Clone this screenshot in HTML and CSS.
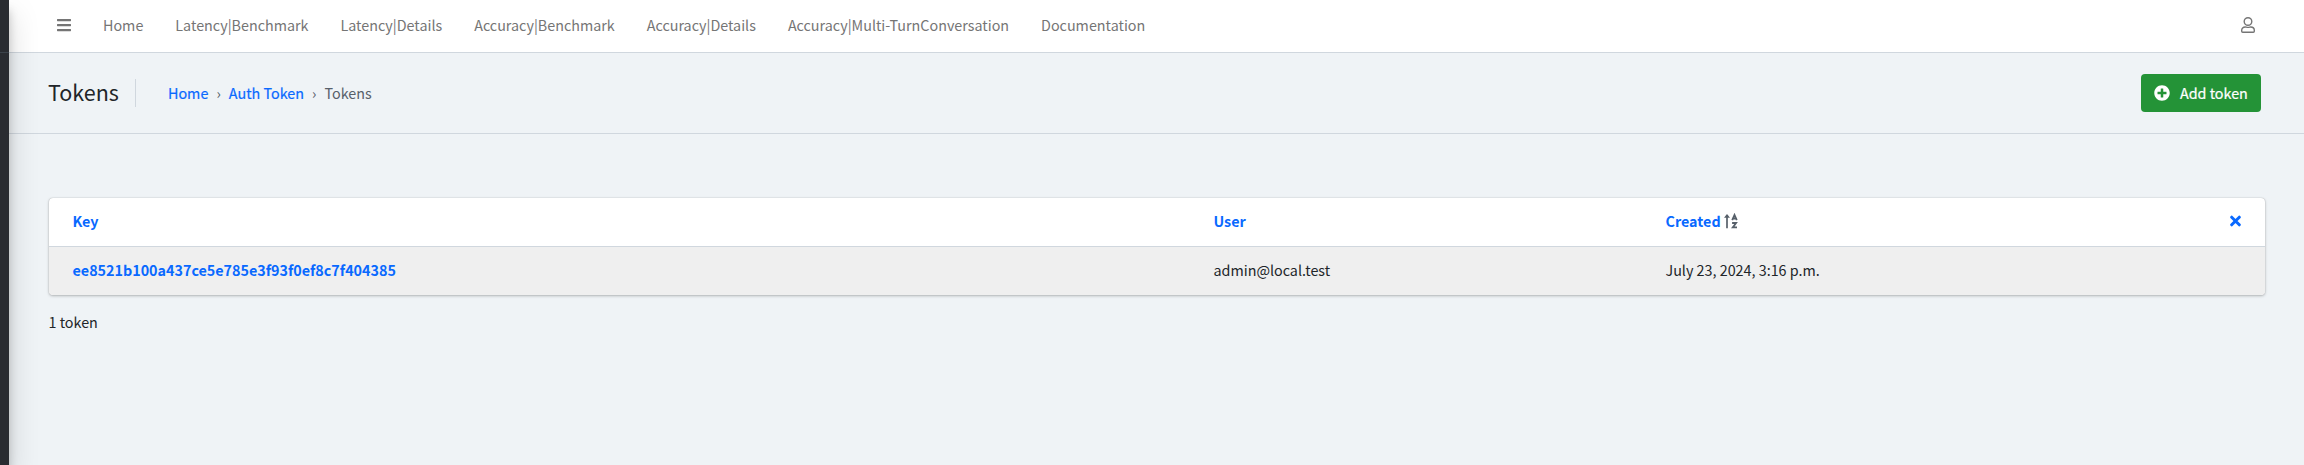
FILE: index.html
```html
<!DOCTYPE html>
<html lang="en">
<head>
<meta charset="utf-8">
<title>Tokens</title>
<link rel="stylesheet" href="styles.css">
</head>
<body>
<div class="wrapper">
  <aside class="sidebar"><div class="brand"></div></aside>
  <div class="main">
    <nav class="navbar">
      <a class="toggle"><svg width="14" height="16" viewBox="0 0 448 512"><path fill="currentColor" d="M16 132h416c8.837 0 16-7.163 16-16V76c0-8.837-7.163-16-16-16H16C7.163 60 0 67.163 0 76v40c0 8.837 7.163 16 16 16zm0 160h416c8.837 0 16-7.163 16-16v-40c0-8.837-7.163-16-16-16H16c-8.837 0-16 7.163-16 16v40c0 8.837 7.163 16 16 16zm0 160h416c8.837 0 16-7.163 16-16v-40c0-8.837-7.163-16-16-16H16c-8.837 0-16 7.163-16 16v40c0 8.837 7.163 16 16 16z"/></svg></a>
      <a>Home</a>
      <a>Latency|Benchmark</a>
      <a>Latency|Details</a>
      <a>Accuracy|Benchmark</a>
      <a>Accuracy|Details</a>
      <a>Accuracy|Multi-TurnConversation</a>
      <a>Documentation</a>
      <a class="user"><svg width="14" height="16" viewBox="0 0 14 16"><g fill="none" stroke="currentColor" stroke-width="1.4"><circle cx="7" cy="4.5" r="3.8"/><path d="M4.300 10C2 10 .7 11.500 .7 13.200v1.100c0 .6.4 1 1 1h10.600c.6 0 1-.4 1-1v-1.100c0-1.700-1.300-3.200-3.600-3.200-.8 0-1.300.4-2.700.4s-1.900-.4-2.700-.4z"/></g></svg></a>
    </nav>
    <header class="page-header">
      <h1>Tokens</h1>
      <div class="crumbs"><a>Home</a><i>›</i><a>Auth Token</a><i>›</i><span>Tokens</span></div>
      <a class="add"><svg width="16" height="16" viewBox="0 0 512 512"><path fill="currentColor" d="M256 8C119 8 8 119 8 256s111 248 248 248 248-111 248-248S393 8 256 8zm144 276c0 6.600-5.400 12-12 12h-92v92c0 6.600-5.400 12-12 12h-56c-6.600 0-12-5.400-12-12v-92h-92c-6.600 0-12-5.400-12-12v-56c0-6.600 5.400-12 12-12h92v-92c0-6.600 5.400-12 12-12h56c6.600 0 12 5.400 12 12v92h92c6.600 0 12 5.400 12 12v56z"/></svg><span>Add token</span></a>
    </header>
    <section class="content">
      <div class="card">
        <div class="row head">
          <b>Key</b><b>User</b>
          <div class="sort"><b>Created</b><svg width="14" height="16" viewBox="0 0 14 16"><path fill="none" stroke="currentColor" stroke-width="1.700" d="M3 15.300V2"/><path fill="currentColor" d="M0 4.700 3 1l3 3.700z"/><path fill="none" stroke="currentColor" stroke-width="1.800" d="M8.200 7.200 10.500 2l2.300 5.200M9 5.600h3M8.100 10h4L8.800 14.400h4.200"/></svg></div>
          <svg class="clear" width="11" height="16" viewBox="0 0 11 16"><path fill="none" stroke="currentColor" stroke-width="3" stroke-linecap="round" d="m1.700 4.200 7.600 7.600m0-7.600-7.600 7.600"/></svg>
        </div>
        <div class="row body"><b>ee8521b100a437ce5e785e3f93f0ef8c7f404385</b><span>admin@local.test</span><span>July 23, 2024, 3:16 p.m.</span></div>
      </div>
      <p class="count">1 token</p>
    </section>
  </div>
</div>
</body>
</html>
```
FILE: styles.css
```css
* { box-sizing: border-box; }
body { margin: 0; background: #eff3f6; color: #212529; font: 14.34px/24px "Noto Sans CJK JP", "Noto Sans CJK SC", sans-serif; }
.wrapper { display: flex; height: 465px; overflow: hidden; }
.sidebar { width: 9px; background: #292c31; z-index: 1; box-shadow: 0 14px 28px rgba(0,0,0,.25), 0 10px 10px rgba(0,0,0,.22); }
.brand { height: 53px; border-bottom: 1px solid #3b434b; }
.main { flex: 1; min-width: 0; }
.navbar { display: flex; height: 53px; padding: 0 32px 3px; align-items: center; gap: 32px; background: #fff; border-bottom: 1px solid #d0d7de; color: #757575; }
.navbar svg { display: block; }
.toggle { margin-left: 16px; }
.user { margin-left: auto; margin-right: 17px; padding-top: 1px; }
.page-header { display: flex; align-items: center; height: 81px; padding: 0 43px 0 39px; border-bottom: 1px solid #d0d7de; }
h1 { margin: 0; width: 88px; height: 28px; border-right: 1px solid #d0d7de; font-size: 21.5px; line-height: 26px; font-weight: 400; }
.crumbs { display: flex; margin-left: 32px; color: #57606a; }
.crumbs i { width: 20.5px; text-align: center; font-style: normal; }
.crumbs a, .row b, .clear { color: #0969ff; }
.crumbs a { -webkit-text-stroke: .2px; }
.add { display: flex; align-items: center; gap: 10px; width: 120px; height: 38px; margin-left: auto; padding-left: 13px; border-radius: 4px; background: #249337; color: #fff; -webkit-text-stroke: .2px; }
.content { padding: 64px 39px 0 40px; }
.card { border-radius: 4px; background: #fff; box-shadow: 0 0 1px rgba(0,0,0,.3), 0 1px 3px rgba(0,0,0,.25); overflow: hidden; }
.row { display: grid; grid-template-columns: 1141px 452px 1fr auto; align-items: center; padding: 0 24.5px 2px 23.5px; height: 49px; }
.head { border-bottom: 1px solid #d0d7de; }
.body { background: #efefef; height: 48px; }
.sort { display: flex; align-items: center; gap: 3px; color: #57606a; }
.count { margin: 15px 0 0 -.5px; }
```
